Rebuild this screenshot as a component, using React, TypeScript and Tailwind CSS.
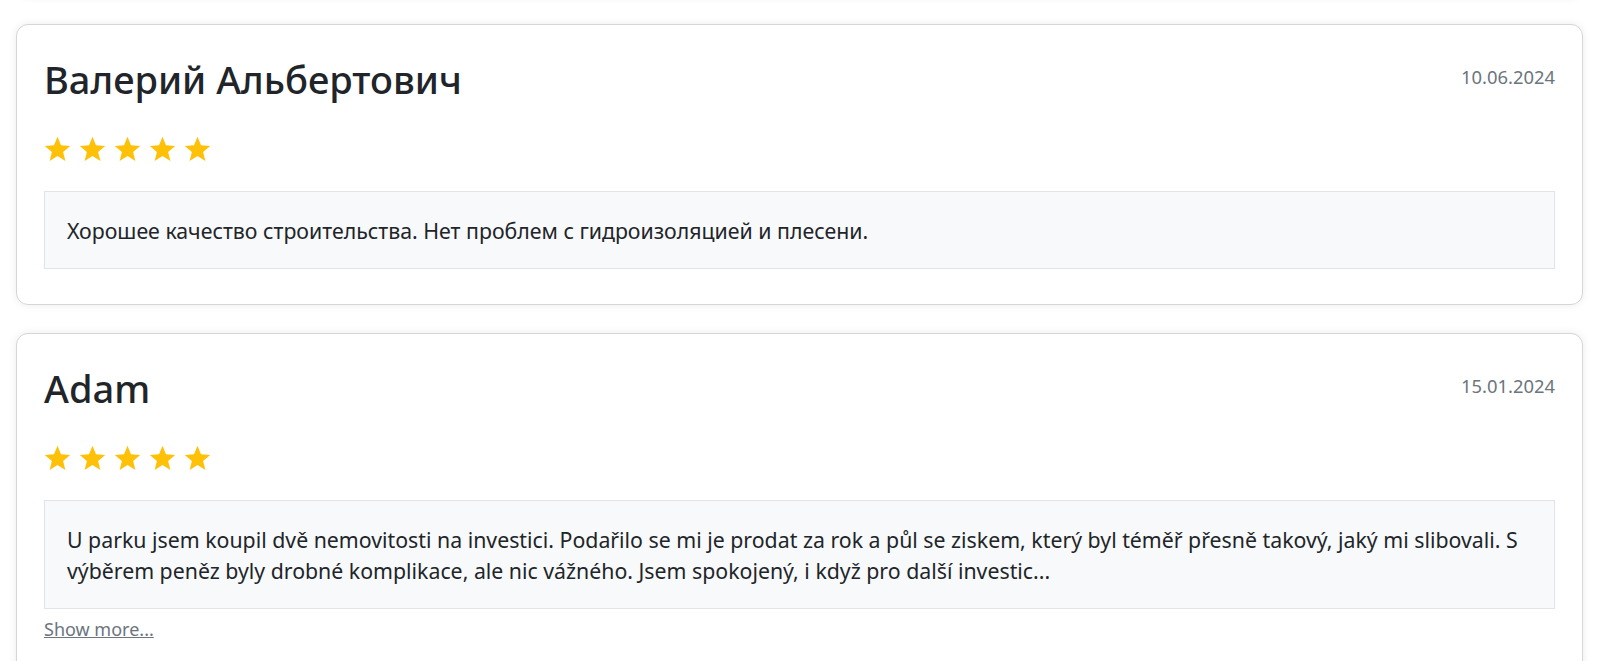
const reviews = [
  {
    name: 'Валерий Альбертович',
    date: '10.06.2024',
    rating: 5,
    text: 'Хорошее качество строительства. Нет проблем с гидроизоляцией и плесени.',
    more: false,
  },
  {
    name: 'Adam',
    date: '15.01.2024',
    rating: 5,
    text: 'U parku jsem koupil dvě nemovitosti na investici. Podařilo se mi je prodat za rok a půl se ziskem, který byl téměř přesně takový, jaký mi slibovali. S výběrem peněz byly drobné komplikace, ale nic vážného. Jsem spokojený, i když pro další investic...',
    more: true,
  },
]

const Star = () => (
  <svg viewBox="0 0 24 24" className="w-[27px] h-[27px]" aria-hidden="true">
    <path
      fill="#ffc107"
      d="M12 1.5l3.1 7.6 8.2.6-6.3 5.3 2 8-7-4.4-7 4.4 2-8L.7 9.7l8.2-.6z"
    />
  </svg>
)

export default function App() {
  return (
    <div className="min-h-screen bg-white font-['Noto_Sans',sans-serif] text-[#212529] overflow-hidden">
      <div className="flex flex-col gap-[28px] pl-4 pr-[17px] -mt-[44px]">
        <div className="h-[40px] rounded-xl border border-[#dcdcdc] shadow-[0_0_10px_rgba(0,0,0,0.1)]" />
        {reviews.map((r) => (
          <div
            key={r.name}
            className="rounded-xl border border-[#d6d6d6] bg-white px-[27px] pt-[30px] pb-[35px] shadow-[0_0_8px_rgba(0,0,0,0.08)]"
          >
            <div className="flex items-start justify-between">
              <h2 className="text-[38px] leading-[48px] font-medium text-[#212529]">
                {r.name}
              </h2>
              <span className="mt-[8px] text-[18.4px] leading-[1.5] text-[#6c757d]">{r.date}</span>
            </div>
            <div className="flex gap-[8px] mt-[32px]">
              {Array.from({ length: r.rating }).map((_, i) => (
                <Star key={i} />
              ))}
            </div>
            <div className="mt-[29px] border border-[#e0e3e7] bg-[#f8f9fa] px-[22px] py-[22.5px] text-[21.3px] leading-[31px]">
              {r.text}
            </div>
            {r.more && (
              <a href="#" className="block mt-[7px] text-[18px] leading-[27px] text-[#6c757d] underline">
                Show more...
              </a>
            )}
          </div>
        ))}
      </div>
    </div>
  )
}
